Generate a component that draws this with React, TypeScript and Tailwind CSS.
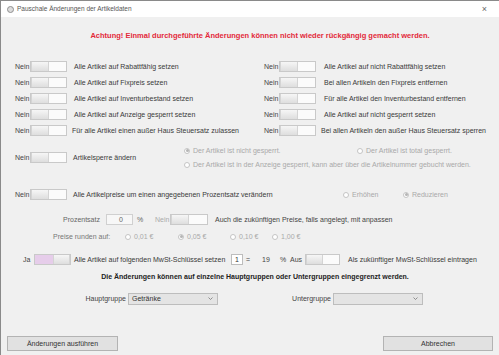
import React from 'react'

const FONT = { fontFamily: '"Liberation Sans", Arial, sans-serif' }

const LEFT_ROWS = [
  'Alle Artikel auf Rabattfähig setzen',
  'Alle Artikel auf Fixpreis setzen',
  'Alle Artikel auf Inventurbestand setzen',
  'Alle Artikel auf Anzeige gesperrt setzen',
  'Für alle Artikel einen außer Haus Steuersatz zulassen',
]

const RIGHT_ROWS = [
  'Alle Artikel auf nicht Rabattfähig setzen',
  'Bei allen Artikeln den Fixpreis entfernen',
  'Für alle Artikel den Inventurbestand entfernen',
  'Alle Artikel auf nicht gesperrt setzen',
  'Bei allen Artikeln den außer Haus Steuersatz sperren',
]

function Toggle({ on = false, w = 37 }: { on?: boolean; w?: number }) {
  return (
    <div
      className={`flex h-[11px] shrink-0 border border-[#c9c9c9] ${on ? 'bg-[#e6cdea] justify-end' : 'bg-[#fbfbfb] justify-start'}`}
      style={{ width: w }}
    >
      <div className="h-full w-1/2 border-r border-l border-[#d4d4d4] bg-gradient-to-b from-[#f6f6f6] to-[#dedede]" />
    </div>
  )
}

function Radio({ checked = false, label }: { checked?: boolean; label: string }) {
  return (
    <div className="flex items-center gap-[3px] text-[#a9a9a9]">
      <span className="flex h-[6px] w-[6px] items-center justify-center rounded-full border border-[#c4c4c4] bg-white">
        {checked && <span className="h-[3px] w-[3px] rounded-full bg-[#b5b5b5]" />}
      </span>
      <span>{label}</span>
    </div>
  )
}

function SwitchRow({ label, labelGap = 7 }: { label: string; labelGap?: number }) {
  return (
    <div className="flex h-[12px] items-center">
      <span className="w-[15px] text-[#444]">Nein</span>
      <Toggle />
      <span className="text-[#3a3a3a]" style={{ marginLeft: labelGap }}>{label}</span>
    </div>
  )
}

function Select({ value }: { value?: string }) {
  return (
    <div className="flex h-[12px] w-[90px] items-center justify-between border border-[#bdbdbd] bg-[#e4e4e4] pl-[3px] pr-[4px] text-[#333]">
      <span>{value}</span>
      <svg width="5" height="3" viewBox="0 0 5 3">
        <path d="M0.5 0.5 L2.5 2.5 L4.5 0.5" fill="none" stroke="#777" strokeWidth="0.8" />
      </svg>
    </div>
  )
}

export default function App() {
  return (
    <div className="flex h-[355px] w-[499px] flex-col overflow-hidden border-t border-l border-[#8a8a8a] bg-[#f0f0f0] text-[7px] leading-none" style={FONT}>
      <div className="flex h-[16px] shrink-0 items-center bg-white pl-[6px] pr-[12px]">
        <span className="h-[7px] w-[7px] rounded-full border border-[#8f8f8f] bg-[#dcdcdc]" />
        <span className="ml-[3px] text-[6.5px] text-[#555]">Pauschale Änderungen der Artikeldaten</span>
        <span className="ml-auto text-[9px] text-[#666]">×</span>
      </div>

      <div className="mt-[15px] pl-[20px] text-center text-[7.5px] font-bold text-[#e3283a]">
        Achtung! Einmal durchgeführte Änderungen können nicht wieder rückgängig gemacht werden.
      </div>

      <div className="mt-[21px] flex">
        <div className="flex w-[263px] flex-col gap-[4px] pl-[14px]">
          {LEFT_ROWS.map((l, i) => (
            <SwitchRow key={l} label={l} labelGap={i === 4 ? 5 : 7} />
          ))}
        </div>
        <div className="flex flex-col gap-[4px]">
          {RIGHT_ROWS.map((l, i) => (
            <SwitchRow key={l} label={l} labelGap={i === 4 ? 5 : 8} />
          ))}
        </div>
      </div>

      <div className="mt-[8px] flex h-[26px] items-center pl-[14px]">
        <span className="w-[15px] text-[#444]">Nein</span>
        <Toggle />
        <span className="ml-[6px] w-[111px] text-[#3a3a3a]">Artikelsperre ändern</span>
        <div className="flex flex-col gap-[7px]">
          <div className="flex">
            <div className="w-[173px]"><Radio checked label="Der Artikel ist nicht gesperrt." /></div>
            <Radio label="Der Artikel ist total gesperrt." />
          </div>
          <Radio label="Der Artikel ist in der Anzeige gesperrt, kann aber über die Artikelnummer gebucht werden." />
        </div>
      </div>

      <div className="mt-[18px] flex h-[12px] items-center pl-[14px]">
        <span className="w-[15px] text-[#444]">Nein</span>
        <Toggle />
        <span className="ml-[6px] w-[270px] text-[#3a3a3a]">Alle Artikelpreise um einen angegebenen Prozentsatz verändern</span>
        <div className="w-[60px]"><Radio label="Erhöhen" /></div>
        <Radio checked label="Reduzieren" />
      </div>

      <div className="mt-[13px] flex h-[12px] items-center pl-[62px]">
        <span className="w-[43px] text-[#666]">Prozentsatz</span>
        <div className="flex h-[11px] w-[27px] items-center justify-end border border-[#d0d0d0] bg-[#f7f7f7] pr-[9px] text-[#666]">0</div>
        <span className="ml-[4px] w-[18px] text-[#666]">%</span>
        <span className="w-[15px] text-[#aaa]">Nein</span>
        <Toggle w={38} />
        <span className="ml-[7px] text-[#444]">Auch die zukünftigen Preise, falls angelegt, mit  anpassen</span>
      </div>

      <div className="mt-[5px] flex h-[12px] items-center pl-[52px]">
        <span className="w-[72px] text-[#777]">Preise runden auf:</span>
        <div className="w-[53px]"><Radio label="0,01 €" /></div>
        <div className="w-[52px]"><Radio checked label="0,05 €" /></div>
        <div className="w-[42px]"><Radio label="0,10 €" /></div>
        <Radio label="1,00 €" />
      </div>

      <div className="mt-[11px] flex h-[12px] items-center pl-[22px]">
        <span className="w-[11px] text-[#444]">Ja</span>
        <Toggle on />
        <span className="ml-[3px] w-[157px] text-[#3a3a3a]">Alle Artikel auf folgenden MwSt-Schlüssel setzen</span>
        <div className="flex h-[11px] w-[12px] items-center justify-center border border-[#bdbdbd] bg-white text-[#333]">1</div>
        <span className="ml-[3px] w-[16px] text-[#444]">=</span>
        <span className="w-[18px] text-[#444]">19</span>
        <span className="w-[10px] text-[#444]">%</span>
        <span className="w-[15px] text-[#444]">Aus</span>
        <Toggle w={35} />
        <span className="ml-[8px] text-[#3a3a3a]">Als zukünftiger MwSt-Schlüssel eintragen</span>
      </div>

      <div className="mt-[7px] pl-[10px] text-center font-bold text-[#222]">
        Die Änderungen können auf einzelne Hauptgruppen oder Untergruppen eingegrenzt werden.
      </div>

      <div className="mt-[13px] flex h-[12px] items-center">
        <span className="w-[127px] pr-[2px] text-right text-[#444]">Hauptgruppe</span>
        <Select value="Getränke" />
        <span className="w-[115px] pr-[2px] text-right text-[#444]">Untergruppe</span>
        <Select />
      </div>

      <div className="mt-[31px] flex justify-between pl-[6px] pr-[6px]">
        <button className="h-[15px] w-[111px] border border-[#b3b3b3] bg-[#e1e1e1] text-[#333]">Änderungen ausführen</button>
        <button className="h-[15px] w-[110px] border border-[#b3b3b3] bg-[#e1e1e1] text-[#333]">Abbrechen</button>
      </div>
    </div>
  )
}
